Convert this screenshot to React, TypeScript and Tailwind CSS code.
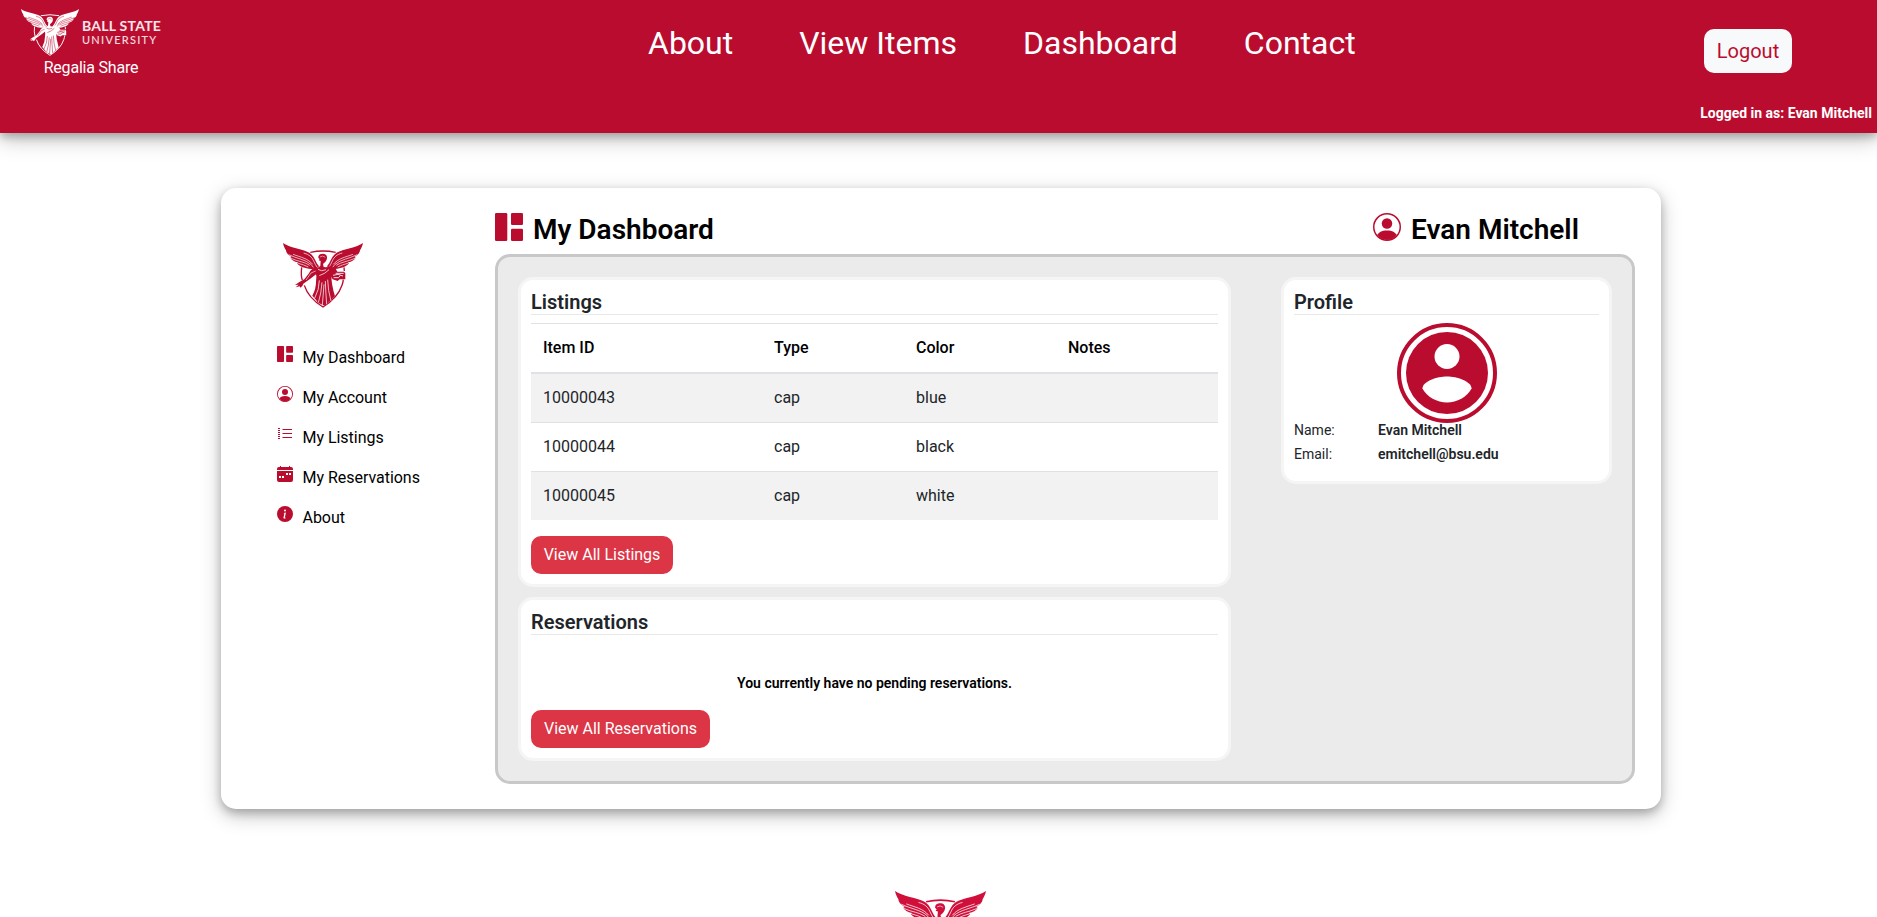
import React from "react";
import { BsInfoCircleFill } from "react-icons/bs";

type IconProps = { className?: string };

const elevation =
  "shadow-[0_4px_8px_0_rgba(0,0,0,0.2),0_6px_20px_0_rgba(0,0,0,0.26)]";

const wing =
  "M0 0C18 14 60 18 79 29C94 38 97 58 108 70L101 77L84 78C66 77 50 71 42 61L45 58C33 56 25 50 22 44L26 42C14 36 9 28 9 22C5 16 2 9 0 0Z";
const wingCuts =
  "M62 30C78 34 87 42 92 54Q97 65 103 74M30 34C54 43 74 46 89 64M17 35C42 47 66 49 84 64L91 73M24 46C46 56 64 56 80 67M43 60Q62 65 76 72";

function Emblem({ className, cut }: IconProps & { cut: string }) {
  return (
    <svg viewBox="0 0 240 195" className={className} fill="currentColor">
      {/* shield */}
      <g fill="none" stroke="currentColor" strokeWidth="4">
        <path d="M82 28Q120 20 158 28" />
        <path d="M56 73Q53 97 58 112M64 127Q76 165 120 192Q164 165 177 127Q180 119 181 110M184 84L183 73" />
      </g>
      {/* wings */}
      <path d={wing} />
      <path d={wing} transform="matrix(-1 0 0 1 240 0)" />
      <g fill="none" stroke={cut} strokeWidth="2">
        <path d={wingCuts} />
        <path d={wingCuts} transform="matrix(-1 0 0 1 240 0)" />
      </g>
      {/* head and torso */}
      <path d="M106 45C105 36 111 32 120 32C129 32 133 39 132 46C131 54 126 59 120 63L122 72Q133 74 143 68L154 78L147 91L142 103L101 100L97 87L103 75L112 69L113 54L107 52L110 48Z" />
      <path d="M111 42Q119 36 127 43" fill="none" stroke={cut} strokeWidth="1.6" />
      {/* outstretched arm */}
      <path d="M102 72Q84 76 78 91L64 109L48 118L36 126L47 125L38 133L50 130L52 134L58 129L61 122L84 106L104 90Z" />
      <path d="M98 84L84 90L69 111" fill="none" stroke={cut} strokeWidth="1.8" />
      {/* book */}
      <path d="M143 84L157 75L163 86H183L187 91V109L170 109L164 114L149 109L143 99Z" />
      <path d="M158 91H182M150 97L165 94L180 99M152 104H166L172 98" fill="none" stroke={cut} strokeWidth="2.6" />
      {/* robe */}
      <path d="M101 90Q120 107 145 95Q145 124 156 160L148 167L144 173L136 177L131 185L120 187L112 182L104 179L100 172L88 158Q99 138 99 117Z" />
      <g fill="none" stroke={cut} strokeWidth="2.2">
        <path d="M109 112Q109 139 95 166M117 118Q115 151 106 179M123 124L118 187M127 114Q128 145 131 184M134 110Q135 144 144 174M105 79Q115 87 129 80M109 98Q127 92 138 80" />
      </g>
    </svg>
  );
}

function DashboardIcon({ className }: IconProps) {
  return (
    <svg viewBox="0 0 28 28" className={className} fill="currentColor">
      <rect width="12.3" height="28" rx="1.3" />
      <rect x="16" width="12" height="12" rx="1.3" />
      <rect x="16" y="15.8" width="12" height="12.2" rx="1.3" />
    </svg>
  );
}

function PersonIcon({ className }: IconProps) {
  return (
    <svg viewBox="0 0 16 16" className={className} fill="currentColor">
      <path d="M13.468 12.37C12.758 11.226 11.195 10 8 10s-4.757 1.225-5.468 2.37A6.987 6.987 0 0 0 8 15a6.987 6.987 0 0 0 5.468-2.63z" />
      <path fillRule="evenodd" d="M8 9a3 3 0 1 0 0-6 3 3 0 0 0 0 6z" />
      <path fillRule="evenodd" d="M8 .85a7.150 7.150 0 1 0 0 14.300A7.150 7.150 0 0 0 8 .85zM0 8a8 8 0 1 1 16 0A8 8 0 0 1 0 8z" />
      <path d="M2.600 12.200h10.800C12.400 14 10.500 15.400 8 15.400S3.600 14 2.600 12.200z" />
    </svg>
  );
}

function ListIcon({ className }: IconProps) {
  return (
    <svg viewBox="0 0 16 16" className={className} fill="currentColor">
      <path d="M5.500 3H15v1H5.500zM5.500 7H15v1H5.500zM5.500 11H15v1H5.500z" />
      <path d="M1 2h2v1H1zM1 4h2v1H1zM1 6h2v1H1zM1 8h2v1H1zM1 10h2v1H1zM1 12h2v1H1z" />
    </svg>
  );
}

function CalendarIcon({ className }: IconProps) {
  return (
    <svg viewBox="0 0 16 16" className={className} fill="currentColor">
      <path d="M3 0h1v1h8V0h1v1h1a2 2 0 0 1 2 2v1H0V3a2 2 0 0 1 2-2h1z" />
      <path
        fillRule="evenodd"
        d="M0 5h16v9a2 2 0 0 1-2 2H2a2 2 0 0 1-2-2zM9 7v2h2V7zM12 7v2h2V7zM2 10v2h2v-2zM5 10v2h2v-2z"
      />
    </svg>
  );
}

function AvatarIcon({ className }: IconProps) {
  return (
    <svg viewBox="0 0 100 100" className={className}>
      <circle cx="50" cy="50" r="48" fill="#fff" stroke="#ba0c2f" strokeWidth="4" />
      <circle cx="50" cy="50" r="41" fill="#ba0c2f" />
      <circle cx="50" cy="33.5" r="12.5" fill="#fff" />
      <path
        fill="#fff"
        d="M25.400 65.500C26 58 40 53.500 50 53.500S74 58 74.600 65.500C70 74 60 79.500 50 79.500S30 74 25.400 65.500z"
      />
    </svg>
  );
}

const menu = [
  { label: "My Dashboard", Icon: DashboardIcon },
  { label: "My Account", Icon: PersonIcon },
  { label: "My Listings", Icon: ListIcon },
  { label: "My Reservations", Icon: CalendarIcon },
  { label: "About", Icon: BsInfoCircleFill },
];

const listings = [
  { id: "10000043", type: "cap", color: "blue" },
  { id: "10000044", type: "cap", color: "black" },
  { id: "10000045", type: "cap", color: "white" },
];

const columns = "grid grid-cols-[231px_142px_152px_162px] px-3";

function Card({
  title,
  className = "",
  children,
}: {
  title: string;
  className?: string;
  children: React.ReactNode;
}) {
  return (
    <section
      className={`rounded-[15px] border-[3px] border-[#f5f5f5] bg-white p-2.5 ${className}`}
    >
      <h2 className="h-[25px] border-b border-[#e8e8e8] text-[20px] leading-[24px] font-semibold">
        {title}
      </h2>
      {children}
    </section>
  );
}

function ActionButton({ children, className }: { children: React.ReactNode; className: string }) {
  return (
    <button
      className={`block h-[38px] rounded-[10px] bg-[#dc3545] text-center text-base whitespace-nowrap text-white ${className}`}
    >
      {children}
    </button>
  );
}

export default function App() {
  return (
    <div className="flex h-[917px] w-full flex-col items-center overflow-hidden bg-white font-['Roboto',sans-serif] text-base text-[#212529]">
      <header className={`grid h-[133px] w-full shrink-0 grid-cols-[648px_1fr_180px] bg-[#ba0c2f] text-white ${elevation}`}>
        <div className="pt-2 pl-[21px]">
          <div className="flex h-[49px] w-[140px]">
            <Emblem cut="#ba0c2f" className="h-[49px] w-[58px] shrink-0" />
            <div className="ml-[3px] pt-[10px] font-['Lato',sans-serif] whitespace-nowrap">
              <div className="text-[14px] leading-[16px] font-bold tracking-[0.25px] text-white/90">
                BALL STATE
              </div>
              <div className="text-[11px] leading-[11px] font-medium tracking-[1.25px] text-white/85">
                UNIVERSITY
              </div>
            </div>
          </div>
          <div className="w-[140px] text-center leading-[22px] tracking-[-0.2px]">Regalia Share</div>
        </div>
        <nav className="flex gap-[66px] pt-[19px] text-[32px] leading-[48px] whitespace-nowrap">
          <a>About</a>
          <a>View Items</a>
          <a>Dashboard</a>
          <a>Contact</a>
        </nav>
        <div className="flex flex-col items-end pt-[29px] pr-[5px]">
          <button className="mr-[80px] h-[44px] w-[88px] rounded-[10px] bg-[#f8f9fa] text-[20px] text-[#ba0c2f]">
            Logout
          </button>
          <p className="mt-[30px] text-[14px] leading-[20px] font-bold whitespace-nowrap">
            Logged in as: Evan Mitchell
          </p>
        </div>
      </header>

      <main className={`mt-[55px] ml-[5px] flex h-[621px] w-[1440px] shrink-0 rounded-[15px] bg-white ${elevation}`}>
        <aside className="w-[274px] pt-[55px] pl-14 text-black">
          <Emblem cut="#ffffff" className="ml-[6px] h-[65px] w-[80px] text-[#ba0c2f]" />
          <ul className="mt-[38px]">
            {menu.map(({ label, Icon }) => (
              <li key={label} className="flex h-10 gap-[9.5px]">
                <Icon className="size-4 shrink-0 text-[#ba0c2f]" />
                <span className="h-6 pt-0.5 leading-[20px] tracking-[-0.03px]">{label}</span>
              </li>
            ))}
          </ul>
        </aside>

        <div className="w-[1140px] pt-[25px]">
          <div className="flex h-[41px] text-[28px] leading-[34px] font-semibold text-black">
            <DashboardIcon className="size-7 text-[#ba0c2f]" />
            <h1 className="ml-[10px] w-[840px]">My Dashboard</h1>
            <PersonIcon className="size-7 text-[#ba0c2f]" />
            <h1 className="ml-[10px]">Evan Mitchell</h1>
          </div>

          <div className="flex h-[530px] items-start justify-between rounded-[15px] border-[3px] border-[#c8c8c8] bg-[#ebebeb] p-5">
            <div className="flex w-[713px] flex-col gap-2.5">
              <Card title="Listings" className="h-[310px]">
                <div className="mt-2 w-[687px] border-t border-[#dee2e6]">
                  <div className={`${columns} h-[50px] items-center border-b-2 border-[#dee2e6] font-medium text-black`}>
                    <span>Item ID</span>
                    <span>Type</span>
                    <span>Color</span>
                    <span>Notes</span>
                  </div>
                  <div className="divide-y divide-[#dee2e6]">
                    {listings.map((item, index) => (
                      <div
                        key={item.id}
                        className={`${columns} ${index === 2 ? "h-[48px]" : "h-[49px]"} items-center ${index % 2 === 0 ? "bg-[#f2f2f2]" : "bg-white"}`}
                      >
                        <span>{item.id}</span>
                        <span>{item.type}</span>
                        <span>{item.color}</span>
                        <span />
                      </div>
                    ))}
                  </div>
                </div>
                <ActionButton className="mt-4 w-[142px]">View All Listings</ActionButton>
              </Card>

              <Card title="Reservations" className="h-[164px]">
                <p className="mt-[38px] h-[37px] text-center text-[14px] leading-[21px] font-semibold text-black">
                  You currently have no pending reservations.
                </p>
                <ActionButton className="w-[179px]">View All Reservations</ActionButton>
              </Card>
            </div>

            <Card title="Profile" className="h-[207px] w-[331px]">
              <AvatarIcon className="mx-auto mt-2 size-[100px]" />
              <dl className="-mt-[5px] grid grid-cols-[84px_1fr] text-[14px] leading-[24px]">
                <dt>Name:</dt>
                <dd className="font-semibold">Evan Mitchell</dd>
                <dt>Email:</dt>
                <dd className="font-semibold">emitchell@bsu.edu</dd>
              </dl>
            </Card>
          </div>
        </div>
      </main>

      <footer className="mt-[82px] ml-[3px] shrink-0">
        <Emblem cut="#ffffff" className="h-[74px] w-[91px] text-[#d0103a]" />
      </footer>
    </div>
  );
}
